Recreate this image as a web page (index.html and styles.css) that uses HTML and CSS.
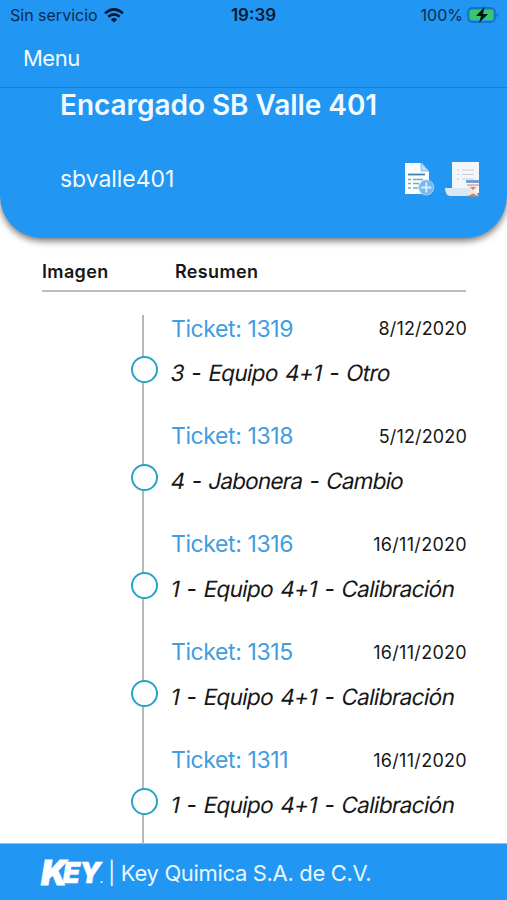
FILE: index.html
```html
<!DOCTYPE html>
<html lang="es">
<head>
<meta charset="utf-8">
<title>Tickets</title>
<link rel="stylesheet" href="styles.css">
</head>
<body>
<div class="app">
  <header class="top">
    <div class="status">
      <div class="carrier"><span class="carrier-name">Sin servicio</span>
        <svg class="wifi" width="20" height="15" viewBox="0 0 20 15" fill="none" stroke="#061a33" stroke-width="2.6"><path d="M1 5.4Q10-2.6 19 5.4M4.2 8.8Q10 3.8 15.8 8.8"/><path d="M6.8 11.4Q10 8.5 13.2 11.4L10 14.6Z" fill="#061a33" stroke="none"/></svg>
      </div>
      <span class="time">19:39</span>
      <div class="power"><span class="percent">100%</span>
        <svg class="battery" width="32" height="17" viewBox="0 0 32 17"><rect x="1" y="1" width="27" height="14" rx="4" fill="none" stroke="#1768b0" stroke-width="1.3"/><rect x="3" y="3" width="23" height="10" rx="2" fill="#35c96b"/><path d="M29.6 6v4q1.600-.6 1.600-2t-1.600-2z" fill="#1768b0"/><path d="M17.500 0L9 9h5l-2 7 9-9h-5z" fill="#07121b"/></svg>
      </div>
    </div>
    <nav class="nav"><span class="menu">Menu</span></nav>
    <section class="profile">
      <h1><span class="name">Encargado SB Valle 401</span></h1>
      <div class="account">
        <span class="user">sbvalle401</span>
        <div class="actions">
          <svg width="32" height="36" viewBox="0 0 32 36"><path d="M1 2h17l7 8v23H1z" fill="#fbfdff"/><path d="M17 2v8h8z" fill="#b9ddfa" stroke="#5caeea" stroke-width=".7"/><path d="M4 13.500h17" stroke="#4585ab" stroke-width="1.800"/><path d="M4 18.500h3m2 0h10M4 22.500h3m2 0h6M4 27h3m2 0h5" stroke="#74aeb5" stroke-width="1.300"/><circle cx="22.300" cy="26.500" r="7.500" fill="#78b7ec" stroke="#a6d3f6" stroke-width="1"/><path d="M22.300 21.500v10M17.300 26.500h10" stroke="#d5edff" stroke-width="2"/></svg>
          <svg width="36" height="36" viewBox="0 0 36 36"><path d="M8 1h27v31H8z" fill="#f5f6fc"/><path d="M13 9h2m3 0h12M13 13.500h2m3 0h12M13 18h2m3 0h12" stroke="#c8cbd8" stroke-width="1.200"/><path d="M22 20.500h13" stroke="#6c9bd5" stroke-width="2.800"/><path d="M1 27h26l2 8H6q-5-1-5-8z" fill="#dce8ed"/><path d="M24 24h10q0 3.500-3.500 5.500 3.500 2 3.500 5.500H24q0-3.500 3.500-5.500-3.500-2-3.500-5.500z" fill="#f4e8e3"/><path d="M26 26h6l-3 3zM25 35q4-5 8 0z" fill="#e17d57"/><path d="M23 24h12M23 35h12" stroke="#b98b84" stroke-width="1"/></svg>
        </div>
      </div>
    </section>
  </header>
  <main class="content">
    <div class="columns"><span class="col-image">Imagen</span><span class="col-summary">Resumen</span></div>
    <ol class="timeline">
      <li><i class="dot"></i><div class="row"><span class="ticket">Ticket: 1319</span><time class="date short">8/12/2020</time></div><p><span class="otro">3 - Equipo 4+1 - Otro</span></p></li>
      <li><i class="dot"></i><div class="row"><span class="ticket">Ticket: 1318</span><time class="date short">5/12/2020</time></div><p><span class="cambio">4 - Jabonera - Cambio</span></p></li>
      <li><i class="dot"></i><div class="row"><span class="ticket">Ticket: 1316</span><time class="date">16/11/2020</time></div><p><span>1 - Equipo 4+1 - Calibración</span></p></li>
      <li><i class="dot"></i><div class="row"><span class="ticket">Ticket: 1315</span><time class="date">16/11/2020</time></div><p><span>1 - Equipo 4+1 - Calibración</span></p></li>
      <li><i class="dot"></i><div class="row"><span class="ticket">Ticket: 1311</span><time class="date">16/11/2020</time></div><p><span>1 - Equipo 4+1 - Calibración</span></p></li>
    </ol>
  </main>
  <footer class="footer"><span class="logo"><span class="logo-k">K</span><span class="logo-ey">EY</span><span class="logo-dot">.</span></span><span class="company">| Key Quimica S.A. de C.V.</span></footer>
</div>
</body>
</html>
```
FILE: styles.css
```css
* { box-sizing: border-box; }
body { margin: 0; background: #fff; font-family: Inter, "Liberation Sans", sans-serif; color: #171717; }
.app { width: 507px; height: 900px; display: flex; flex-direction: column; overflow: hidden; }
.top { height: 238px; flex: none; background: #2196f3; border-radius: 0 0 42px 42px; box-shadow: 0 3px 7px rgba(0,0,0,.55); color: #f1faff; }
.status { height: 30px; display: grid; grid-template-columns: 1fr auto 1fr; align-items: center; padding: 0 8px 0 10px; color: #0b2c50; font-size: 16px; }
.carrier, .power { display: flex; align-items: center; }
.carrier { gap: 6px; }
.power { justify-content: flex-end; gap: 4px; }
.time { font-weight: 600; font-size: 17px; color: #061a33; margin-right: 2px; }
.nav { height: 58px; border-bottom: 1px solid #1b7ed0; padding: 0 23px 2px; display: flex; align-items: center; font-size: 22px; letter-spacing: -.5px; }
.profile { padding: 0 27px 0 60px; }
h1 { margin: 0; height: 35px; line-height: 35px; font-size: 28px; font-weight: 600; letter-spacing: -.05px; white-space: nowrap; }
.account { height: 112px; display: flex; align-items: center; justify-content: space-between; font-size: 23px; letter-spacing: -.05px; }
.actions { display: flex; gap: 8px; }
.content { flex: 1; min-height: 0; overflow: hidden; padding: 16px 41px 0 42px; clip-path: inset(10px 0 0 0); }
.columns { height: 38px; border-bottom: 2px solid #bdbdbd; display: grid; grid-template-columns: 133px 1fr; line-height: 36px; font-size: 18px; font-weight: 600; letter-spacing: .35px; }
.timeline { list-style: none; margin: 23px 0 0 100px; padding: 0; border-left: 2px solid #b8b8b8; }
.timeline li { height: 107.900px; padding-left: 27px; position: relative; }
.dot { position: absolute; left: -13px; top: 41px; width: 27px; height: 27px; border: 2px solid #27a3c5; border-radius: 50%; background: #fff; }
.row { height: 27px; display: flex; justify-content: space-between; align-items: center; }
.ticket { font-size: 23px; letter-spacing: -.4px; color: #429ddf; }
.date { font-size: 18px; letter-spacing: .3px; margin-right: -1px; }
.date.short { letter-spacing: .15px; }
.timeline p { margin: 17px 0 0; height: 28px; line-height: 28px; font-size: 22.500px; letter-spacing: -.65px; word-spacing: 1.700px; white-space: nowrap; }
.timeline p span { display: inline-block; transform: skewX(-11deg); }
.timeline .otro { letter-spacing: -.65px; }
.timeline .cambio { letter-spacing: -.8px; }
.footer { height: 57px; flex: none; background: #2196f3; border-top: 1px solid #82c4f5; padding: 2px 0 0 41px; display: flex; align-items: center; color: #e8f7ff; font-size: 22px; }
.company { letter-spacing: -.33px; white-space: nowrap; }
.logo { width: 67px; color: #fff; font-weight: 900; font-style: italic; display: flex; align-items: center; white-space: nowrap; }
.logo-k { font-size: 34px; line-height: 40px; letter-spacing: -4px; -webkit-text-stroke: .8px #fff; }
.logo-ey { font-size: 28px; letter-spacing: -1px; -webkit-text-stroke: .5px #fff; }
.logo-dot { font-size: 9px; align-self: flex-end; margin-bottom: 8px; }
```
